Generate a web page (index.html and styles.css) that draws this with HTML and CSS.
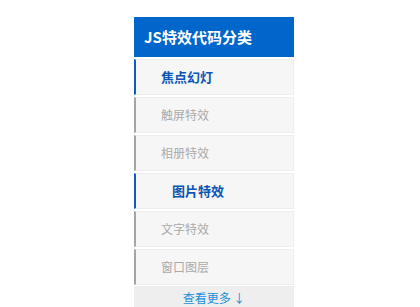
FILE: index.html
```html
<!DOCTYPE html>
<html lang="zh">
<head>
<meta charset="utf-8">
<link rel="stylesheet" href="styles.css">
</head>
<body>
<div class="panel">
  <div class="panel-title">JS特效代码分类</div>
  <ul class="menu">
    <li class="menu-item active">焦点幻灯</li>
    <li class="menu-item">触屏特效</li>
    <li class="menu-item">相册特效</li>
    <li class="menu-item active hover">图片特效</li>
    <li class="menu-item">文字特效</li>
    <li class="menu-item">窗口图层</li>
  </ul>
  <div class="more">查看更多 ↓</div>
</div>
</body>
</html>
```
FILE: styles.css
```css
html, body {
  margin: 0;
  padding: 0;
  background: #fff;
}
body {
  font-family: "Noto Sans CJK SC", "Noto Sans", sans-serif;
}
.panel {
  width: 160px;
  margin: 17px 0 0 134px;
}
.panel-title {
  height: 40px;
  line-height: 40px;
  background: #0066cc;
  color: #fff;
  font-size: 15px;
  font-weight: bold;
  padding-left: 10px;
}
.menu {
  list-style: none;
  margin: 0;
  padding: 0;
}
.menu-item {
  margin-top: 2px;
  height: 34px;
  line-height: 34px;
  background: #f6f6f6;
  border: 1px solid #eeeeee;
  border-left: 2px solid #a3a3a3;
  padding-left: 25px;
  font-size: 12px;
  color: #aaaaaa;
}
.menu-item.active {
  border-left-color: #0a5cc4;
  color: #0a55b5;
  font-weight: bold;
  font-size: 13px;
}
.menu-item.hover {
  padding-left: 36px;
}
.more {
  margin-top: 1px;
  height: 22px;
  line-height: 23px;
  background: #eeeeee;
  color: #1790dc;
  font-size: 12px;
  text-align: center;
}
```
